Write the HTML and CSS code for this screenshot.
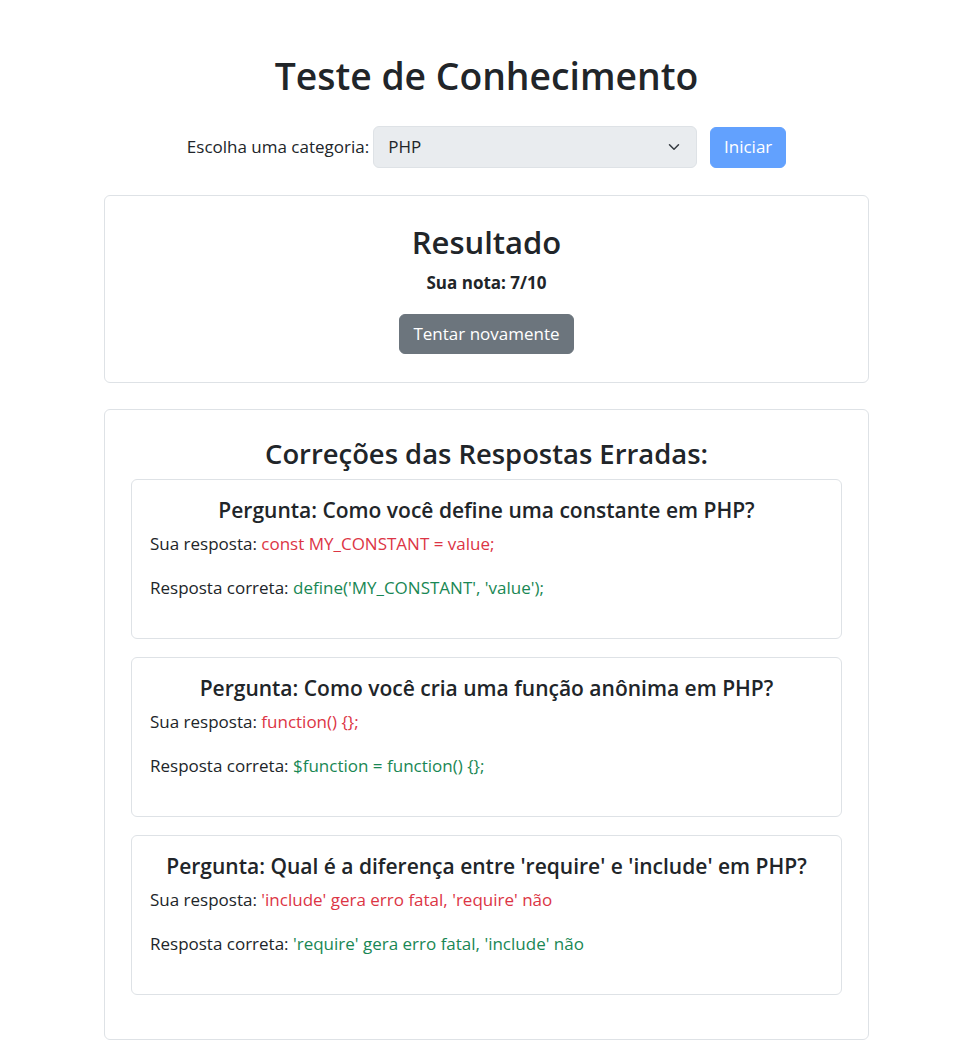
FILE: index.html
```html
<!DOCTYPE html>
<html lang="pt">
<head>
<meta charset="utf-8">
<title>Teste de Conhecimento</title>
<link rel="stylesheet" href="styles.css">
</head>
<body>
<div class="container">
  <h1 class="title">Teste de Conhecimento</h1>
  <div class="picker">
    <label class="picker-label" for="cat">Escolha uma categoria:</label>
    <div class="select" id="cat">
      <span class="select-value">PHP</span>
      <svg class="chevron" width="12" height="12" viewBox="0 0 16 16"><path d="M2 5l6 6 6-6" fill="none" stroke="#343a40" stroke-width="2" stroke-linecap="round" stroke-linejoin="round"/></svg>
    </div>
    <button class="btn btn-start" disabled>Iniciar</button>
  </div>

  <div class="card result">
    <h2 class="card-title">Resultado</h2>
    <p class="score">Sua nota: 7/10</p>
    <button class="btn btn-retry">Tentar novamente</button>
  </div>

  <div class="card corrections">
    <h3 class="section-title">Correções das Respostas Erradas:</h3>
    <div class="qcard">
      <h5 class="qtitle">Pergunta: Como você define uma constante em PHP?</h5>
      <p class="answer">Sua resposta: <span class="wrong">const MY_CONSTANT = value;</span></p>
      <p class="answer">Resposta correta: <span class="right">define('MY_CONSTANT', 'value');</span></p>
    </div>
    <div class="qcard">
      <h5 class="qtitle">Pergunta: Como você cria uma função anônima em PHP?</h5>
      <p class="answer">Sua resposta: <span class="wrong">function() {};</span></p>
      <p class="answer">Resposta correta: <span class="right">$function = function() {};</span></p>
    </div>
    <div class="qcard">
      <h5 class="qtitle">Pergunta: Qual é a diferença entre 'require' e 'include' em PHP?</h5>
      <p class="answer">Sua resposta: <span class="wrong">'include' gera erro fatal, 'require' não</span></p>
      <p class="answer">Resposta correta: <span class="right">'require' gera erro fatal, 'include' não</span></p>
    </div>
  </div>
</div>
</body>
</html>
```
FILE: styles.css
```css
* { box-sizing: border-box; }
body {
  margin: 0;
  font-family: "Open Sans", "Noto Sans", sans-serif;
  font-size: 17px;
  line-height: 24px;
  color: #212529;
  background: #fff;
}
.container {
  max-width: 765px;
  margin: 0 auto;
  padding-top: 54px;
}
.title {
  margin: 0;
  text-align: center;
  font-size: 37.3px;
  font-weight: 600;
  line-height: 44px;
}
.picker {
  margin-top: 28px;
  display: flex;
  justify-content: center;
  align-items: center;
  gap: 4px;
}
.select {
  width: 324px;
  height: 42px;
  background: #e9ecef;
  border: 1px solid #dee2e6;
  border-radius: 6px;
  display: flex;
  align-items: center;
  justify-content: space-between;
  padding: 0 16px 0 14px;
}
.btn {
  font: inherit;
  border: 1px solid transparent;
  border-radius: 6px;
  color: #fff;
  padding: 6px 12px;
  line-height: 24px;
}
.btn-start {
  margin-left: 9px;
  background: #62a1fe;
  border-color: #62a1fe;
  height: 41px;
  width: 76px;
}
.card {
  border: 1px solid #dee2e6;
  border-radius: 6px;
  text-align: center;
}
.result {
  margin-top: 27px;
  padding: 28px 16px 27px;
  height: 188px;
}
.card-title {
  margin: 0;
  font-size: 31px;
  font-weight: 600;
  line-height: 36px;
}
.score {
  margin: 11px 0 19px;
  font-weight: 700;
}
.btn-retry {
  background: #6c757d;
  border-color: #6c757d;
  height: 40px;
  width: 175px;
}
.corrections {
  margin-top: 26px;
  padding: 28px 26px 44px;
  display: flex;
  flex-direction: column;
  gap: 18px;
}
.section-title {
  margin: 0 0 -9px;
  font-size: 27.4px;
  font-weight: 600;
  line-height: 32px;
}
.qcard {
  border: 1px solid #dee2e6;
  border-radius: 6px;
  padding: 16px 18px 18px;
  text-align: left;
}
.qtitle {
  margin: 0 0 8px;
  text-align: center;
  font-size: 21px;
  font-weight: 600;
  line-height: 28px;
}
.answer { margin: 0 0 20px; }
.wrong { color: #dc3545; }
.right { color: #198754; }
```
